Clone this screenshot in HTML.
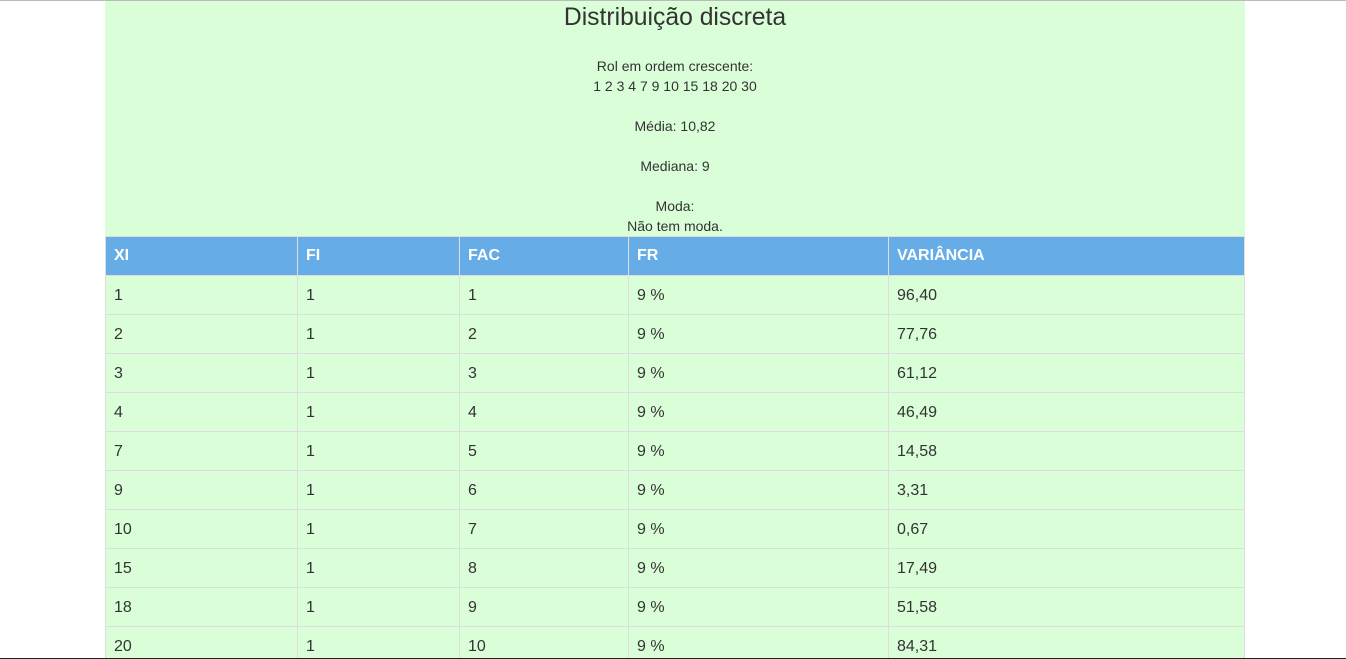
<!DOCTYPE html>
<html style="overflow:hidden;height:659px"><head><meta charset="utf-8"><style>
body{margin:0;background:#fff;font-family:"Liberation Sans",Arial,sans-serif;color:#333;width:1346px;height:659px;overflow:hidden;position:relative}
.top{position:absolute;top:0;left:0;width:1346px;height:1px;background:#bbb;z-index:2}
.bot{position:absolute;top:658px;left:0;width:1346px;height:1px;background:#222;z-index:2}
.box{position:absolute;left:105px;top:1px;width:1140px;height:657px;background:#daffd8;overflow:hidden}
h1{margin:0;position:absolute;top:3px;width:100%;text-align:center;font-weight:normal;font-size:24.7px;line-height:28px}
.info{position:absolute;top:55px;width:100%;text-align:center;font-size:14px;line-height:20px}
table{position:absolute;top:235px;left:0;width:1140px;border-collapse:collapse;font-size:16px}
td,th{border:1px solid #ddd;height:39px;padding:0 8px;text-align:left;box-sizing:border-box}
td{padding-top:2px}
th{background:#66acE6;color:#fff;font-weight:bold}
</style></head><body>
<div class="top"></div>
<div class="box">
<h1>Distribuição discreta</h1>
<div class="info">Rol em ordem crescente:<br>1 2 3 4 7 9 10 15 18 20 30<br><br>Média: 10,82<br><br>Mediana: 9<br><br>Moda:<br>Não tem moda.</div>
<table>
<tr><th style="width:192px">XI</th><th style="width:162px">FI</th><th style="width:169px">FAC</th><th style="width:260px">FR</th><th>VARIÂNCIA</th></tr>
<tr><td>1</td><td>1</td><td>1</td><td>9 %</td><td>96,40</td></tr>
<tr><td>2</td><td>1</td><td>2</td><td>9 %</td><td>77,76</td></tr>
<tr><td>3</td><td>1</td><td>3</td><td>9 %</td><td>61,12</td></tr>
<tr><td>4</td><td>1</td><td>4</td><td>9 %</td><td>46,49</td></tr>
<tr><td>7</td><td>1</td><td>5</td><td>9 %</td><td>14,58</td></tr>
<tr><td>9</td><td>1</td><td>6</td><td>9 %</td><td>3,31</td></tr>
<tr><td>10</td><td>1</td><td>7</td><td>9 %</td><td>0,67</td></tr>
<tr><td>15</td><td>1</td><td>8</td><td>9 %</td><td>17,49</td></tr>
<tr><td>18</td><td>1</td><td>9</td><td>9 %</td><td>51,58</td></tr>
<tr><td>20</td><td>1</td><td>10</td><td>9 %</td><td>84,31</td></tr>
</table>
</div>
<div class="bot"></div>
</body></html>
